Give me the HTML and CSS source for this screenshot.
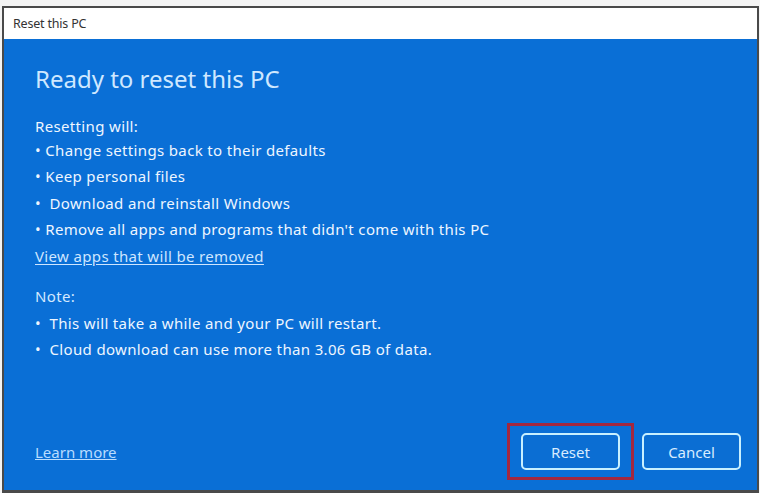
FILE: index.html
```html
<!DOCTYPE html>
<html>
<head>
<meta charset="utf-8">
<link rel="stylesheet" href="styles.css">
</head>
<body>
<div class="window">
  <div class="titlebar">Reset this PC</div>
  <div class="content">
    <div class="main">
      <h1 class="heading">Ready to reset this PC</h1>
      <div class="line first">Resetting will:</div>
      <div class="line">• Change settings back to their defaults</div>
      <div class="line">• Keep personal files</div>
      <div class="line">•&nbsp; Download and reinstall Windows</div>
      <div class="line">• Remove all apps and programs that didn't come with this PC</div>
      <div class="line"><a class="link" href="#">View apps that will be removed</a></div>
      <div class="line note">Note:</div>
      <div class="line">•&nbsp; This will take a while and your PC will restart.</div>
      <div class="line">•&nbsp; Cloud download can use more than 3.06 GB of data.</div>
    </div>
    <div class="footer">
      <a class="learn" href="#">Learn more</a>
      <div class="buttons">
        <div class="highlight"><button class="btn">Reset</button></div>
        <button class="btn">Cancel</button>
      </div>
    </div>
  </div>
</div>
</body>
</html>
```
FILE: styles.css
```css
html, body {
  margin: 0;
  padding: 0;
  background: #f4f4f4;
}
body {
  width: 760px;
  height: 493px;
  overflow: hidden;
  font-family: "Noto Sans", "Open Sans", sans-serif;
}
.window {
  margin: 6px 0 0 2px;
  width: 753px;
  height: 482px;
  border: 2px solid #4a4a4a;
  border-bottom-width: 3px;
  display: flex;
  flex-direction: column;
  box-sizing: content-box;
}
.titlebar {
  height: 31px;
  background: #ffffff;
  color: #333;
  font-size: 12.5px;
  line-height: 31px;
  padding-left: 9px;
  letter-spacing: -0.2px;
  flex: none;
}
.content {
  flex: 1;
  background: #0a6fd6;
  display: flex;
  flex-direction: column;
  padding: 0 16px 0 31px;
}
.main {
  flex: 1;
}
.heading {
  margin: 24px 0 18px 0;
  font-weight: normal;
  font-size: 24px;
  line-height: 32px;
  color: #cfe8ff;
  letter-spacing: 0;
}
.line {
  font-size: 15px;
  line-height: 26.5px;
  color: #eef6ff;
  letter-spacing: 0.35px;
}
.first {
  margin-bottom: -3px;
}
.note {
  margin-top: 14px;
  color: #d4e9ff;
}
.link {
  color: #cfe6ff;
  text-decoration: underline;
  text-underline-offset: 2px;
}
.footer {
  display: flex;
  align-items: center;
  justify-content: space-between;
  height: 57px;
  margin-bottom: 10px;
}
.learn {
  color: #b8dcff;
  font-size: 15px;
  text-decoration: underline;
  letter-spacing: 0;
}
.buttons {
  display: flex;
  align-items: center;
  gap: 8px;
}
.highlight {
  border: 3px solid #a3283f;
  padding: 7px 11px;
}
.btn {
  width: 99px;
  height: 37px;
  background: #0b6ed3;
  border: 2px solid #c8f0ff;
  border-radius: 5px;
  color: #d8ecff;
  font-family: "Noto Sans", "Open Sans", sans-serif;
  font-size: 15px;
  letter-spacing: 0;
  box-sizing: border-box;
}
```
